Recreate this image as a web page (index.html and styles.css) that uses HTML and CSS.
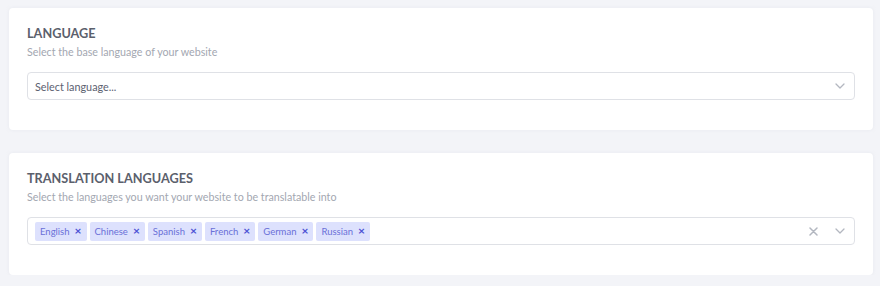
FILE: index.html
```html
<!DOCTYPE html>
<html>
<head>
<meta charset="utf-8">
<link rel="stylesheet" href="styles.css">
</head>
<body>
<div class="page">
  <section class="card">
    <h2 class="card-title">LANGUAGE</h2>
    <p class="card-desc">Select the base language of your website</p>
    <div class="select">
      <span class="placeholder">Select language...</span>
      <div class="indicators">
        <svg class="chev" width="10" height="6" viewBox="0 0 10 6"><path d="M1 1l4 4 4-4" fill="none" stroke="#b3b7c0" stroke-width="1.3" stroke-linecap="round" stroke-linejoin="round"/></svg>
      </div>
    </div>
  </section>
  <section class="card">
    <h2 class="card-title">TRANSLATION LANGUAGES</h2>
    <p class="card-desc">Select the languages you want your website to be translatable into</p>
    <div class="select multi">
      <div class="tags">
        <span class="tag">English<span class="tag-x">×</span></span>
        <span class="tag">Chinese<span class="tag-x">×</span></span>
        <span class="tag">Spanish<span class="tag-x">×</span></span>
        <span class="tag">French<span class="tag-x">×</span></span>
        <span class="tag">German<span class="tag-x">×</span></span>
        <span class="tag">Russian<span class="tag-x">×</span></span>
      </div>
      <div class="indicators">
        <svg class="clear" width="9" height="9" viewBox="0 0 9 9"><path d="M1 1l7 7M8 1l-7 7" fill="none" stroke="#b3b7c0" stroke-width="1.5" stroke-linecap="round"/></svg>
        <svg class="chev" width="10" height="6" viewBox="0 0 10 6"><path d="M1 1l4 4 4-4" fill="none" stroke="#b3b7c0" stroke-width="1.3" stroke-linecap="round" stroke-linejoin="round"/></svg>
      </div>
    </div>
  </section>
</div>
</body>
</html>
```

FILE: styles.css
```css
* { box-sizing: border-box; }
html, body { margin: 0; padding: 0; background: #f3f4f8; }
body { font-family: "Lato", "Open Sans", sans-serif; }
.page {
  display: flex;
  flex-direction: column;
  gap: 23px;
  padding: 8px 7px 0 9px;
}
.card {
  background: #ffffff;
  border-radius: 4px;
  padding: 16px 18px 30px 18px;
  box-shadow: 0 0 3px rgba(220, 222, 232, 0.5);
}
.card-title {
  margin: 0;
  font-size: 12.7px;
  line-height: 18px;
  font-weight: 700;
  color: #5b606c;
}
.card-desc {
  margin: 2px 0 0 0;
  font-size: 10.7px;
  line-height: 16px;
  color: #a3a7b1;
}
.select {
  margin-top: 12px;
  height: 28px;
  border: 1px solid #dfe1e6;
  border-radius: 4px;
  display: flex;
  align-items: center;
  justify-content: space-between;
  padding: 0 7px 0 7px;
}
.placeholder {
  font-size: 10.8px;
  color: #5c6170;
}
.tags {
  display: flex;
  gap: 3px;
}
.tag {
  display: inline-flex;
  align-items: center;
  height: 19px;
  padding: 0 5px;
  background: #dde1fd;
  border-radius: 2px;
  font-size: 9.5px;
  color: #6a70d8;
}
.tag-x {
  margin-left: 5px;
  font-weight: 700;
  font-size: 12px;
  color: #4a50d4;
  line-height: 1;
}
.indicators {
  display: flex;
  align-items: center;
  gap: 17px;
  padding-right: 2px;
}
.chev, .clear { display: block; }
```
